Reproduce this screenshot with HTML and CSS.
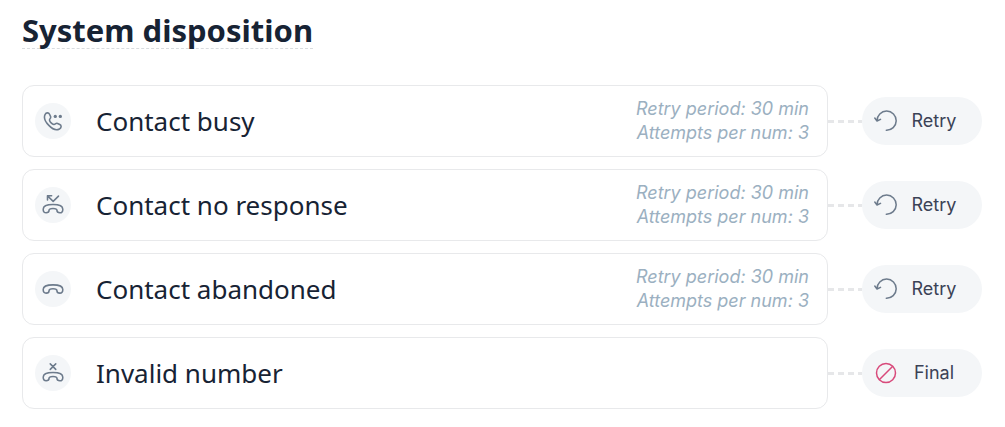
FILE: index.html
```
<!DOCTYPE html>
<html lang="en">
<head>
<meta charset="utf-8">
<title>System disposition</title>
<link rel="stylesheet" href="styles.css">
</head>
<body>
<svg class="sprite" aria-hidden="true">
  <symbol id="handset" viewBox="0 0 24 24">
    <path d="M1.300 12.500C1.300 8.800 6 7.500 12 7.500S22.700 8.800 22.700 12.500C22.700 15.300 21.500 16.500 19.500 16.500C17.500 16.500 16.300 15.500 16.300 13.800C16.300 12.300 15 11.800 12 11.800S7.700 12.300 7.700 13.800C7.700 15.500 6.500 16.500 4.500 16.500C2.500 16.500 1.300 15.300 1.300 12.500Z"/>
  </symbol>
  <symbol id="retry" viewBox="0 0 24 24">
    <path d="M3 11.800A9.600 9.600 0 1 1 12.300 21.300M.8 9L3 12L6.500 10.300"/>
  </symbol>
</svg>
<main class="page">
  <h1 class="title">System disposition</h1>
  <ul class="list">
    <li class="row">
      <div class="card">
        <span class="badge"><svg class="icon" viewBox="0 0 24 24"><path d="M3.300 5C4.500 2.700 7.200 2.500 8.200 4.600L9.300 7C10.200 9 8 9.500 8.200 11C8.500 13 11 15.500 13 15.800C14.500 16 15 13.800 17 14.700L19.400 15.800C21.500 16.800 21.300 19.500 19 20.700C15 22.800 10.300 19.800 7.500 16.800C4.500 13.700 1.400 9 3.300 5Z"/><circle class="dot" cx="14.500" cy="7" r="1.800"/><circle class="dot" cx="20" cy="7" r="1.800"/></svg></span>
        <h2 class="name">Contact busy</h2>
        <p class="details">Retry period: 30 min<br>Attempts per num: 3</p>
      </div>
      <span class="link"></span>
      <button class="action" type="button"><svg class="action-icon"><use href="#retry"/></svg><span class="label">Retry</span></button>
    </li>
    <li class="row">
      <div class="card">
        <span class="badge"><svg class="icon" viewBox="0 0 24 24"><use href="#handset" y="4" width="24" height="24"/><path d="M6 6.500V2H10.500M6 2L12.200 8L18 2.300"/></svg></span>
        <h2 class="name">Contact no response</h2>
        <p class="details">Retry period: 30 min<br>Attempts per num: 3</p>
      </div>
      <span class="link"></span>
      <button class="action" type="button"><svg class="action-icon"><use href="#retry"/></svg><span class="label">Retry</span></button>
    </li>
    <li class="row">
      <div class="card">
        <span class="badge"><svg class="icon" viewBox="0 0 24 24"><use href="#handset" width="24" height="24"/></svg></span>
        <h2 class="name">Contact abandoned</h2>
        <p class="details">Retry period: 30 min<br>Attempts per num: 3</p>
      </div>
      <span class="link"></span>
      <button class="action" type="button"><svg class="action-icon"><use href="#retry"/></svg><span class="label">Retry</span></button>
    </li>
    <li class="row">
      <div class="card">
        <span class="badge"><svg class="icon" viewBox="0 0 24 24"><use href="#handset" y="4" width="24" height="24"/><path d="M9 2L15 8M15 2L9 8"/></svg></span>
        <h2 class="name">Invalid number</h2>
      </div>
      <span class="link"></span>
      <button class="action" type="button"><svg class="action-icon final" viewBox="0 0 24 24"><circle cx="12" cy="12" r="9.500"/><path d="M5.500 18.500L18.500 5.500"/></svg><span class="label">Final</span></button>
    </li>
  </ul>
</main>
</body>
</html>
```
FILE: styles.css
```
* { box-sizing: border-box; }
body { margin: 0; background: #fff; color: #172334; font-family: Inter, "Liberation Sans", sans-serif; }
.sprite { position: absolute; width: 0; height: 0; }
.page { padding: 13px 23px 18px 22px; }
.title { width: fit-content; margin: 0 0 36px; border-bottom: 1px dashed #d9dcdf; font: 700 31px/35px "Noto Sans", sans-serif; }
.list { display: grid; gap: 12px; margin: 0; padding: 0; list-style: none; }
.row { display: flex; align-items: center; }
.card { display: flex; flex: 1; align-items: center; min-height: 72px; padding: 0 18px 0 12px; border: 1px solid #e8e9eb; border-radius: 12px; }
.badge { display: grid; place-items: center; width: 36px; height: 36px; margin-right: 25px; border-radius: 50%; background: #f4f6f8; }
.icon { width: 22px; height: 22px; }
.icon, .action-icon { fill: none; stroke: #6d7b8c; stroke-width: 1.5; stroke-linecap: round; stroke-linejoin: round; }
.icon { stroke-width: 1.7; }
.dot { fill: #6d7b8c; stroke: none; }
.name { flex: 1; margin: 0; font: 400 26px/34px "Noto Sans", sans-serif; }
.details { margin: 0; color: #9bb0c1; font-size: 18px; font-style: italic; line-height: 24px; text-align: right; }
.link { width: 34px; height: 3px; background: repeating-linear-gradient(90deg, #e6e7e9 0 6px, transparent 6px 10px); }
.action { display: flex; align-items: center; width: 120px; height: 48px; padding: 0 12px; border: 0; border-radius: 24px; background: #f4f6f8; color: #3b4256; font: 400 18px/24px Inter, "Liberation Sans", sans-serif; }
.action-icon { width: 24px; height: 24px; }
.label { flex: 1; text-align: center; }
.final { stroke: #d84a7b; }
```
